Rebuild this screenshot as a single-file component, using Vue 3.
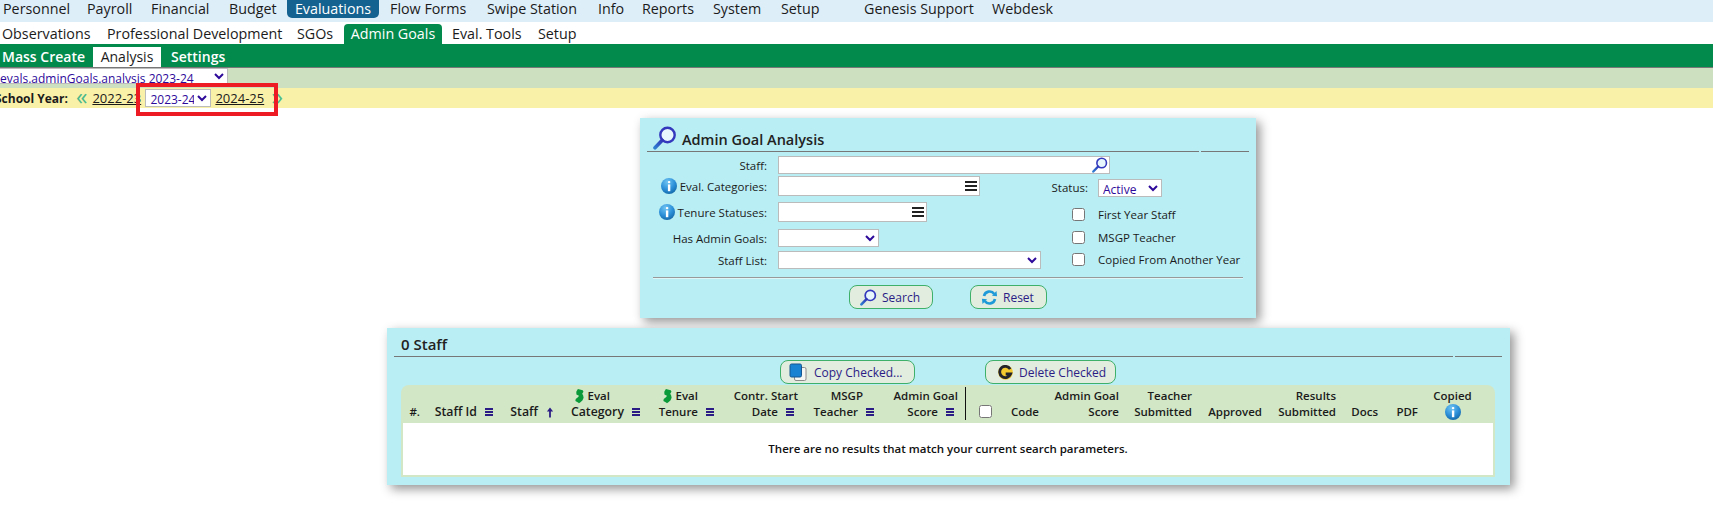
<script setup>
const nav1 = ['Personnel','Payroll','Financial','Budget','Evaluations','Flow Forms','Swipe Station','Info','Reports','System','Setup','Genesis Support','Webdesk']
const nav2 = ['Observations','Professional Development','SGOs','Admin Goals','Eval. Tools','Setup']
const nav3 = ['Mass Create','Analysis','Settings']
const cols = [
  { k:'num', l2:'#.' },
  { k:'sid', l2:'Staff Id', menu:true },
  { k:'stf', l2:'Staff', arrow:true },
  { k:'cat', l1:'Eval', nj:true, l2:'Category', menu:true },
  { k:'ten', l1:'Eval', nj:true, l2:'Tenure', menu:true },
  { k:'dat', l1:'Contr. Start', l2:'Date', menu:true },
  { k:'msg', l1:'MSGP', l2:'Teacher', menu:true },
  { k:'sco', l1:'Admin Goal', l2:'Score', menu:true },
  { k:'chk', check:true },
  { k:'cod', l2:'Code' },
  { k:'sc2', l1:'Admin Goal', l2:'Score' },
  { k:'tea', l1:'Teacher', l2:'Submitted' },
  { k:'app', l2:'Approved' },
  { k:'res', l1:'Results', l2:'Submitted' },
  { k:'doc', l2:'Docs' },
  { k:'pdf', l2:'PDF' },
  { k:'cop', l1:'Copied', info:true },
]
</script>

<template>
  <div class="page">
    <svg class="defs" width="0" height="0" aria-hidden="true">
      <defs>
        <radialGradient id="ig" cx="40%" cy="25%" r="85%">
          <stop offset="0" stop-color="#6fc4f2"/><stop offset="0.55" stop-color="#2b8fd8"/><stop offset="1" stop-color="#10609f"/>
        </radialGradient>
        <linearGradient id="hg" x1="0" y1="1" x2="1" y2="0">
          <stop offset="0" stop-color="#2f7fd0"/><stop offset="1" stop-color="#3236b8"/>
        </linearGradient>
        <symbol id="mag" viewBox="0 0 24 24">
          <circle cx="14.5" cy="9" r="7.2" fill="#e6f6fc" stroke="#3338bd" stroke-width="2.4"/>
          <path d="M9.2 14.3 2 21.8" stroke="url(#hg)" stroke-width="3.6" stroke-linecap="round" fill="none"/>
        </symbol>
        <symbol id="info" viewBox="0 0 16 16">
          <circle cx="8" cy="8" r="8" fill="url(#ig)"/>
          <rect x="6.9" y="3" width="2.4" height="2.2" rx="1" fill="#fff"/>
          <rect x="6.9" y="6.4" width="2.4" height="6.8" fill="#fff"/>
        </symbol>
        <symbol id="nj" viewBox="0 0 10 16">
          <path d="M3.2 0.2 8.6 1.6 9.4 3.2 8 5.6 9 7.2 9.6 10 8.2 13 6 15 4.4 16 3.4 15.2 0.4 13.6 0.8 11.4 3.6 9 4.4 7.6 1.6 6.4 1.4 3.4Z" fill="#0b9a3a"/>
        </symbol>
        <symbol id="refresh" viewBox="0 0 18 18">
          <path d="M3.2 7.5A6 6 0 0 1 14 5.2" fill="none" stroke="#1f9ad8" stroke-width="2.8"/>
          <path d="M11.6 7.2 17 7.6 16.4 2Z" fill="#1f9ad8"/>
          <path d="M14.8 10.5A6 6 0 0 1 4 12.8" fill="none" stroke="#1f9ad8" stroke-width="2.8"/>
          <path d="M6.4 10.8 1 10.4 1.6 16Z" fill="#1f9ad8"/>
        </symbol>
        <symbol id="copy" viewBox="0 0 18 18">
          <rect x="5.5" y="4.5" width="11.5" height="13" rx="1.5" fill="#f4f6f4" stroke="#8a8a8a"/>
          <rect x="1" y="1" width="11.5" height="13" rx="1.5" fill="#1782d2" stroke="#14568f"/>
        </symbol>
        <symbol id="gee" viewBox="0 0 16 16">
          <circle cx="8" cy="8" r="7.8" fill="#f3c92f"/>
          <path d="M13 4.4A6 6 0 1 0 13.4 9.6H8.2" fill="none" stroke="#23232b" stroke-width="3"/>
        </symbol>
      </defs>
    </svg>

    <nav class="nav1">
      <a v-for="n in nav1" :key="n" :class="{ on: n === 'Evaluations' }">{{ n }}</a>
    </nav>
    <nav class="nav2">
      <a v-for="n in nav2" :key="n" :class="{ on: n === 'Admin Goals' }">{{ n }}</a>
    </nav>
    <nav class="nav3">
      <a v-for="n in nav3" :key="n" :class="{ on: n === 'Analysis' }">{{ n }}</a>
    </nav>

    <div class="viewbar">
      <select class="viewsel"><option>evals.adminGoals.analysis 2023-24</option></select>
    </div>
    <div class="yearbar">
      <b class="sy">School Year:</b>
      <span class="chev first">«</span>
      <a class="yr">2022-23</a>
      <select class="yrsel"><option>2023-24</option></select>
      <a class="yr">2024-25</a>
      <span class="chev">»</span>
    </div>
    <div class="redbox"></div>

    <section class="panel p1">
      <div class="ptitle t1">
        <h2><svg class="ic24"><use href="#mag"/></svg>Admin Goal Analysis</h2>
        <i></i>
      </div>
      <div class="form">
        <label class="lb h18">Staff:</label>
        <div class="inp staffinp"><svg class="ic16"><use href="#mag"/></svg></div>

        <label class="lb h20"><svg class="ic16"><use href="#info"/></svg>Eval. Categories:</label>
        <div class="inp catinp"><span class="burger"><i></i><i></i><i></i></span></div>
        <label class="statuslb">Status:</label>
        <select class="statussel"><option>Active</option></select>

        <label class="lb h20"><svg class="ic16"><use href="#info"/></svg>Tenure Statuses:</label>
        <div class="inp teninp"><span class="burger"><i></i><i></i><i></i></span></div>
        <input class="cb c1" type="checkbox">
        <span class="cl c1">First Year Staff</span>

        <label class="lb h18">Has Admin Goals:</label>
        <select class="sel hasel"><option></option></select>
        <input class="cb c2" type="checkbox">
        <span class="cl c2">MSGP Teacher</span>

        <label class="lb h18">Staff List:</label>
        <select class="sel listsel"><option></option></select>
        <input class="cb c2" type="checkbox">
        <span class="cl c2">Copied From Another Year</span>
      </div>
      <hr class="rule">
      <div class="btns b1">
        <button class="btn search"><svg class="ic17"><use href="#mag"/></svg>Search</button>
        <button class="btn reset"><svg class="ic17"><use href="#refresh"/></svg>Reset</button>
      </div>
    </section>

    <section class="panel p2">
      <div class="ptitle t2">
        <h2>0 Staff</h2>
        <i></i>
      </div>
      <div class="btns b2">
        <button class="btn copy"><svg class="ic18"><use href="#copy"/></svg>Copy Checked...</button>
        <button class="btn del"><svg class="ic15"><use href="#gee"/></svg>Delete Checked</button>
      </div>
      <div class="table">
        <div class="thead">
          <div v-for="c in cols" :key="c.k" class="th" :class="c.k">
            <span v-if="c.l1" class="l1"><svg v-if="c.nj" class="njic"><use href="#nj"/></svg>{{ c.l1 }}</span>
            <span v-if="c.l2" class="l2">{{ c.l2 }}
              <span v-if="c.menu" class="mini"><i></i><i></i><i></i></span>
              <svg v-if="c.arrow" class="arrow" viewBox="0 0 9 12"><path d="M4.5 0.5 8 5H5.5V11.5H3.5V5H1Z" fill="#2b1c85"/></svg>
            </span>
            <input v-if="c.check" class="cb" type="checkbox">
            <svg v-if="c.info" class="ic16"><use href="#info"/></svg>
          </div>
        </div>
        <div class="tbody">There are no results that match your current search parameters.</div>
      </div>
    </section>
  </div>
</template>

<style>
html, body { overflow: hidden; background: #fff; }
</style>

<style scoped>
.page { position: relative; width: 1713px; height: 512px; overflow: hidden; font-family: "Open Sans", "Noto Sans", sans-serif; color: #1b1b1b; font-size: 12px; }
.defs { position: absolute; }
a { white-space: nowrap; }

.nav1, .nav2, .nav3 { display: grid; align-items: start; box-sizing: border-box; font-size: 14.3px; }
.nav1 { height: 22px; background: #deeef9; padding-left: 3px; grid-template-columns: 84px 64px 78px 58px 103px 97px 111px 44px 71px 68px 83px 128px auto; line-height: 18px; }
.nav1 a.on { width: 92px; height: 18px; text-align: center; background: #14628f; color: #fff; border-radius: 0 0 5px 5px; }
.nav2 { height: 22px; padding-left: 2px; line-height: 20px; padding-top: 2px; grid-template-columns: 105px 190px 47px 108px 86px auto; }
.nav2 a.on { width: 98px; height: 20px; text-align: center; background: #028a4c; color: #fff; border-radius: 4px 4px 0 0; }
.nav3 { height: 24px; padding: 3px 0 0 2px; background: #028a4c; color: #fff; border-bottom: 1px solid #777; line-height: 20px; font-size: 14px; font-weight: 600; grid-template-columns: 91px 78px auto; }
.nav3 a.on { width: 68px; height: 20px; text-align: center; background: #fff; color: #1b1b1b; font-weight: 400; }

.viewbar { height: 20px; background: #cde0bf; }
.viewsel { display: block; margin-left: -5px; width: 233px; height: 16px; padding: 0; border: 1px solid #bbb; background: #fff; color: #2e0a9a; font: 12px "Open Sans", sans-serif; }
.yearbar { display: flex; align-items: center; height: 20px; background: #faf1a9; }
.sy { display: flex; justify-content: flex-end; width: 68px; white-space: nowrap; font-weight: 700; font-size: 12px; }
.chev { color: #4cb98b; font-size: 23px; line-height: 18px; margin-left: 4px; margin-top: -4px; }
.chev.first { margin-left: 8px; margin-right: 5px; }
.yr { color: #1b1b1b; text-decoration: underline; font-size: 13px; width: 53px; }
.yrsel { width: 66px; height: 18px; margin: 0 4px 0 0; padding: 0; border: 1px solid #bbb; background: #fff; color: #2e0a9a; font: 12px "Open Sans", sans-serif; }
.yr + .yrsel + .yr { width: 52px; }
.redbox { position: absolute; left: 136px; top: 83px; width: 142px; height: 33px; box-sizing: border-box; border: 4px solid #ed1c24; }

.panel { box-sizing: border-box; background: #b9eef4; box-shadow: 4px 4px 10px rgba(0,0,0,.42); }
.p1 { width: 616px; height: 200px; margin: 10px 0 0 640px; padding: 0 0 0 7px; }
.p2 { width: 1123px; height: 157px; margin: 10px 0 0 387px; padding: 0 0 0 7px; }
.ptitle { display: flex; gap: 2px; align-items: flex-end; }
.t1 { height: 34px; }
.t2 { height: 29px; }
.ptitle h2 { display: flex; align-items: flex-end; margin: 0; box-sizing: border-box; font-size: 15px; font-weight: 600; border-bottom: 1px solid #777; height: 100%; color: #222; }
.t1 h2 { width: 552px; padding: 0 0 2px 6px; font-size: 14.5px; }
.t2 h2 { width: 1059px; padding: 0 0 2px 7px; }
.ptitle i { display: block; height: 0; border-bottom: 1px solid #777; }
.t1 i { width: 48px; }
.t2 i { width: 47px; }
.ic24 { width: 24px; height: 24px; margin: 0 5px -1px 0; }
.ic16 { width: 16px; height: 16px; flex: none; }
.ic17 { width: 17px; height: 17px; flex: none; }
.ic18 { width: 18px; height: 18px; flex: none; }
.ic15 { width: 15px; height: 15px; flex: none; }

.form { display: grid; margin: 4px 0 0 -7px; grid-template-columns: 138px 266px 54px auto; grid-template-rows: 20px 26px 27px 22px 21px; font-size: 11.5px; align-items: start; }
.lb { display: flex; justify-content: flex-end; align-items: center; gap: 3px; padding-right: 11px; grid-column: 1; white-space: nowrap; }
.h18 { height: 18px; }
.h20 { height: 20px; }
.inp { display: flex; align-items: center; justify-content: flex-end; box-sizing: border-box; background: #fff; border: 1px solid #bbb; }
.staffinp { grid-column: 2 / span 2; width: 332px; height: 18px; padding-right: 1px; }
.catinp { width: 202px; height: 20px; padding-right: 2px; }
.teninp { width: 149px; height: 20px; padding-right: 2px; }
.burger { display: flex; flex-direction: column; gap: 2px; width: 12px; }
.burger i { display: block; height: 2px; background: #222; }
.statuslb { text-align: right; padding-right: 10px; grid-column: 3; margin-top: 3px; line-height: 18px; }
.statussel { width: 64px; height: 18px; margin-top: 3px; padding: 0; border: 1px solid #bbb; background: #fff; color: #2e0a9a; font: 12px "Open Sans", sans-serif; }
.sel { height: 18px; padding: 0; border: 1px solid #bbb; background: #fff; color: #2e0a9a; box-sizing: border-box; }
.hasel { width: 101px; }
.listsel { width: 263px; }
.cb { width: 13px; height: 13px; margin: 0; }
.form .cb { grid-column: 3; margin-left: 28px; }
.cb.c1 { margin-top: 6px; }
.cb.c2 { margin-top: 2px; }
.cl { white-space: nowrap; line-height: 18px; }
.cl.c1 { margin-top: 4px; }
.cl.c2 { margin-top: 0; }

.rule { box-sizing: border-box; width: 590px; height: 2px; margin: 5px 0 0 6px; border: 0; border-top: 1px solid #999; border-bottom: 1px solid #dff6f8; }
.btns { display: flex; }
.b1 { margin: 6px 0 0 202px; gap: 37px; }
.b2 { margin: 3px 0 0 386px; gap: 70px; }
.btn { display: flex; align-items: center; gap: 5px; box-sizing: border-box; height: 24px; padding: 0 0 0 10px; background: #e2ecdf; border: 1px solid #3fb06a; border-radius: 8px; color: #2b1c85; font: 12px "Open Sans", sans-serif; white-space: nowrap; }
.search { width: 84px; }
.reset { width: 77px; }
.copy { width: 135px; padding-left: 8px; gap: 7px; }
.del { width: 131px; padding-left: 12px; gap: 6px; }

.table { width: 1094px; margin: 1px 0 0 7px; }
.thead { display: grid; grid-template-columns: 27px 73px 61px 86px 74px 80px 80px 84px 34px 47px 80px 73px 70px 74px 42px 40px 69px; height: 38px; padding-top: 2px; box-sizing: border-box; background: #d2e7c6; border-radius: 8px 8px 0 0; font-size: 11.5px; font-weight: 600; }
.th { display: flex; flex-direction: column; align-items: flex-end; justify-content: flex-end; height: 33px; padding-right: 8px; box-sizing: border-box; white-space: nowrap; line-height: 16px; }
.l1, .l2 { display: flex; align-items: center; height: 16px; }
.l2 { gap: 8px; }
.sid .l2, .stf .l2, .cat .l2 { font-size: 12.3px; }
.njic { width: 9px; height: 16px; margin-right: 4px; }
.mini { display: flex; flex-direction: column; gap: 1.5px; width: 8px; }
.mini i { display: block; height: 1.5px; background: #2b1c85; }
.arrow { width: 8px; height: 11px; }
.cat .l1 { margin-right: 30px; }
.ten .l1 { margin-right: 16px; }
.dat .l1, .sco .l1 { margin-right: -4px; }
.msg .l1 { margin-right: 11px; }
.sco { padding-right: 11px; border-right: 1px solid #111; }
.chk { align-items: flex-start; padding: 0 0 2px 13px; }
.cop { align-items: center; padding: 0 23px 0 7px; }
.tbody { display: flex; align-items: center; justify-content: center; box-sizing: border-box; height: 54px; padding-bottom: 2px; background: #fff; border: 2px solid #d2e7c6; border-top: 0; font-weight: 600; font-size: 11.5px; color: #111; }
</style>
